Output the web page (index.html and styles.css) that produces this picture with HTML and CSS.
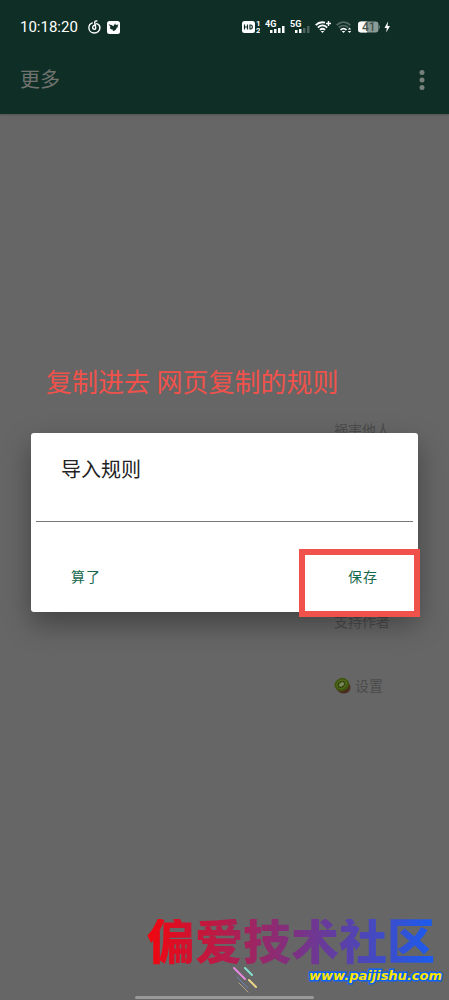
FILE: index.html
```html
<!DOCTYPE html>
<html lang="zh-CN">

<head>
    <meta charset="UTF-8">
    <meta name="viewport" content="width=device-width, initial-scale=1.0">
    <title>更多</title>
    <link rel="stylesheet" href="styles.css">
</head>

<body>
    <header class="header">
        <div class="status">
            <span class="clock">10:18:20</span>
            <svg class="app-icon" width="13" height="14" viewBox="0 0 13 14" fill="none" stroke="#fff" stroke-width="1.4" stroke-linecap="round">
                <path d="M8.800 1C7.300.6 6.600 1.400 6.800 2.800l.9 5c.2 1.900-2.800 2-3 .1C4.500 6 6 5 7.700 4.900"/>
                <path d="M4.300 2.900C2 3.800.9 5.600.9 7.700c0 3 2.400 5.300 5.500 5.300s5.500-2.300 5.500-5.200c0-2-1.300-3.700-3.200-4.200"/>
            </svg>
            <svg class="app-icon" width="13" height="13" viewBox="0 0 13 13">
                <rect width="13" height="13" rx="2.500" fill="#fff"/>
                <path d="M1.500 3.200 5 4.200 6.300 5.300 8.200 2.300 8.700 4 11.500 3.400 10.500 5.300 11.300 6.200 9.700 6.600C9.500 8.700 8 10 5.500 10.100L6.200 8.800C4 8.600 2.900 7.500 2.700 6.200L3.800 6.200Z" fill="#0f2f26"/>
            </svg>
            <div class="signals">
                <svg width="18" height="14" viewBox="0 0 18 14" fill="#fff">
                    <rect y="1" width="13" height="12" rx="2.500"/>
                    <path d="M2.500 4.500v5M5.500 4.500v5M2.500 7h3M8 5v4h.8c2 0 2-4 0-4z" fill="none" stroke="#0f2f26" stroke-width="1.200"/>
                    <text class="tiny" x="14" y="6">1</text>
                    <text class="tiny" x="14" y="13">2</text>
                </svg>
                <svg width="20" height="14" viewBox="0 0 20 14" fill="#fff">
                    <text class="net" x="0" y="7">4G</text>
                    <rect x="5" y="10" width="2.500" height="3"/>
                    <rect x="9" y="9" width="2.500" height="4"/>
                    <rect x="13" y="8" width="2.500" height="5"/>
                    <rect x="17" y="6" width="2.500" height="7"/>
                </svg>
                <svg width="20" height="14" viewBox="0 0 20 14" fill="#fff">
                    <text class="net" x="0" y="7">5G</text>
                    <rect x="5" y="10" width="2.500" height="3"/>
                    <rect x="9" y="9" width="2.500" height="4"/>
                    <rect x="13" y="8" width="2.500" height="5" opacity=".25"/>
                    <rect x="17" y="6" width="2.500" height="7" opacity=".25"/>
                </svg>
                <svg width="16" height="14" viewBox="0 0 16 14" fill="none" stroke="#fff" stroke-width="1.800">
                    <path d="M.7 5.200C3.500 2.400 7 1.800 10 2.700M2.800 7.600c3-2.700 6.600-2.700 9.400 0M4.900 9.900c1.600-1.400 3.600-1.400 5.200 0"/>
                    <path d="M11 3.500h5M13.500 1v5" stroke-width="1.400"/>
                    <path d="M5.800 11h3.400L7.500 13z" fill="#fff" stroke="none"/>
                </svg>
                <svg width="16" height="14" viewBox="0 0 16 14" fill="none" stroke="#fff" stroke-width="1.700">
                    <path d="M.7 5.200c4-4 9.600-4 13.600 0M2.800 7.500c2.800-2.500 6.600-2.500 9.400 0" opacity=".28"/>
                    <path d="M4.500 9.900c1.800-1.600 4.200-1.600 6 0"/>
                    <path d="M5.700 11h3.600L7.500 13zM13.500 7.500l1.700 2h-3.400zM13.500 13l1.700-2h-3.400z" fill="#fff" stroke="none"/>
                </svg>
                <svg width="34" height="14" viewBox="0 0 34 14">
                    <path d="M4 1.500h14.500a3 3 0 0 1 3 3v5a3 3 0 0 1-3 3H4a3 3 0 0 1-3-3v-5a3 3 0 0 1 3-3zM22 5v4c1-.5 1-3.500 0-4z" fill="#8b9b95"/>
                    <path d="M4 1.500h6v11H4a3 3 0 0 1-3-3v-5a3 3 0 0 1 3-3z" fill="#fff"/>
                    <text class="charge" x="5" y="11">41</text>
                    <path d="M31 1.500 27.500 8h2.300l-.6 4.500L33 6h-2.400z" fill="#fff"/>
                </svg>
            </div>
        </div>
        <div class="toolbar">
            <h1 class="title">更多</h1>
            <button class="more" type="button" aria-label="菜单">
                <svg width="6" height="20" viewBox="0 0 6 20" fill="#77807b">
                    <circle cx="3" cy="2.500" r="2.500"/>
                    <circle cx="3" cy="10" r="2.500"/>
                    <circle cx="3" cy="17.500" r="2.500"/>
                </svg>
            </button>
        </div>
    </header>

    <main class="page">
        <ul class="menu">
            <li class="menu-item first">祸害他人</li>
            <li class="menu-item">支持作者</li>
            <li class="menu-item">
                <svg width="17" height="17" viewBox="0 0 17 17">
                    <ellipse cx="9" cy="9.500" rx="7.700" ry="6.800" transform="rotate(35 9 9.500)" fill="#4a2e1d"/>
                    <ellipse cx="7.800" cy="7.500" rx="7.400" ry="6.500" transform="rotate(-20 7.800 7.500)" fill="#3f5611"/>
                    <ellipse cx="7.700" cy="7.300" rx="5.500" ry="4.400" transform="rotate(-30 7.700 7.300)" fill="#56711a"/>
                    <ellipse cx="7.600" cy="7.400" rx="3.700" ry="2.700" transform="rotate(-35 7.600 7.400)" fill="none" stroke="#202a10" stroke-width="1.400" stroke-dasharray="1.200 .6"/>
                    <ellipse cx="7.600" cy="7.400" rx="2.600" ry="1.600" transform="rotate(-35 7.600 7.400)" fill="#7d8760"/>
                </svg>
                设置
            </li>
        </ul>

        <div class="overlay">
            <p class="note">复制进去 网页复制的规则</p>
            <form class="dialog" role="dialog" aria-labelledby="dialogTitle">
                <h2 class="dialog-title"><label id="dialogTitle" for="rule">导入规则</label></h2>
                <input class="rule-input" type="text" id="rule" name="rule">
                <div class="actions">
                    <button class="action" type="button">算了</button>
                    <button class="action" type="button">保存</button>
                </div>
                <span class="marker"></span>
            </form>
        </div>
    </main>

    <footer class="watermark">
        <div class="brand">偏爱技术社区</div>
        <div class="site">
            <svg class="streaks" width="25" height="26" viewBox="0 0 25 26" fill="none" stroke-linecap="round" stroke-width="2">
                <path d="M1 1l11 11" stroke="#e68be0"/>
                <path d="M12 1l7 7" stroke="#86e0cf"/>
                <path d="M16 13l7 7" stroke="#ecd18b"/>
                <path d="M4 10l11 11" stroke="#6d86b8" stroke-width="1"/>
                <path d="M6 16l9 9" stroke="#b5a488" stroke-width="1"/>
            </svg>
            <a class="link" href="#">www.paijishu.com</a>
        </div>
        <div class="home-bar"></div>
    </footer>
</body>

</html>
```

FILE: styles.css
```css
* {
    box-sizing: border-box;
}

body {
    position: relative;
    display: flex;
    flex-direction: column;
    min-height: 100vh;
    margin: 0;
    background-color: #666666;
    font-family: Roboto, "Noto Sans CJK SC", sans-serif;
}

svg {
    display: block;
    flex-shrink: 0;
}

button {
    padding: 0;
    border: none;
    background: none;
    font-family: inherit;
    cursor: pointer;
}

/* header */
.header {
    background-color: #0f2f26;
    box-shadow: 0 1px 2px rgba(0, 0, 0, 0.2);
}

.status {
    display: flex;
    align-items: center;
    height: 54px;
    padding: 0 58px 0 20px;
    color: #ffffff;
}

.clock {
    margin-right: 4px;
    font-size: 15px;
    line-height: 20px;
}

.app-icon {
    margin-left: 6px;
}

.signals {
    display: flex;
    gap: 5px;
    margin-left: auto;
}

.tiny {
    font-size: 8px;
    font-weight: 700;
}

.net {
    font-size: 9px;
    font-weight: 700;
}

.charge {
    font-size: 12px;
    font-weight: 500;
    fill: #43514c;
}

.toolbar {
    display: flex;
    align-items: center;
    justify-content: space-between;
    height: 60px;
    padding: 0 24px 8px 20px;
}

.title {
    margin: 0;
    color: #707370;
    font-size: 20px;
    font-weight: 400;
    line-height: 28px;
}

/* page */
.page {
    position: relative;
    flex: 1;
}

.menu {
    display: flex;
    flex-direction: column;
    align-items: flex-start;
    width: 115px;
    margin: 283px 0 0 auto;
    padding: 0;
    list-style: none;
}

.menu-item {
    display: flex;
    align-items: center;
    gap: 4px;
    height: 64px;
    color: #4b4b4b;
    font-size: 14px;
}

.first {
    margin-bottom: 128px;
}

.overlay {
    position: absolute;
    top: 0;
    left: 0;
    right: 0;
    padding: 249px 31px 0;
}

.note {
    margin: 0 0 30px;
    padding-left: 15px;
    color: #f0524b;
    font-size: 26px;
    font-weight: 400;
    line-height: 40px;
}

.dialog {
    position: relative;
    padding: 21px 5px 17px;
    border-radius: 3px;
    background-color: #ffffff;
    box-shadow: 0 12px 28px rgba(0, 0, 0, 0.35);
}

.dialog-title {
    margin: 0;
    padding: 0 25px;
    color: #222222;
    font-size: 20px;
    font-weight: 400;
    line-height: 32px;
}

.rule-input {
    display: block;
    width: 100%;
    height: 36px;
    padding: 0 25px;
    border: none;
    border-bottom: 1px solid #777777;
    background: none;
    font-size: 16px;
    outline: none;
}

.actions {
    display: flex;
    justify-content: space-between;
    padding: 37px 35px 0;
}

.action {
    color: #17694d;
    font-size: 14px;
    line-height: 36px;
    letter-spacing: 1px;
}

.marker {
    position: absolute;
    right: -2px;
    bottom: -5px;
    width: 121px;
    height: 68px;
    border: 6px solid #f0524b;
    pointer-events: none;
}

/* watermark */
.watermark {
    position: absolute;
    right: 0;
    bottom: 0;
    left: 0;
}

.brand {
    width: 288px;
    margin: 0 14px 0 auto;
    background: linear-gradient(90deg, #f2060e, #803080 50%, #1a5cf0);
    background-clip: text;
    -webkit-background-clip: text;
    color: transparent;
    font-size: 48px;
    font-weight: 900;
    line-height: 48px;
    white-space: nowrap;
}

.site {
    display: flex;
    justify-content: flex-end;
    gap: 51px;
    padding-right: 7px;
}

.link {
    color: #ffe600;
    font-family: "DejaVu Sans", sans-serif;
    font-size: 13px;
    font-style: italic;
    font-weight: 700;
    line-height: 18px;
    text-decoration: none;
    -webkit-text-stroke: 3px #1062ee;
    paint-order: stroke fill;
}

.home-bar {
    width: 40%;
    height: 3px;
    margin: 3px auto 1px;
    border-radius: 2px;
    background-color: #999999;
}
```
